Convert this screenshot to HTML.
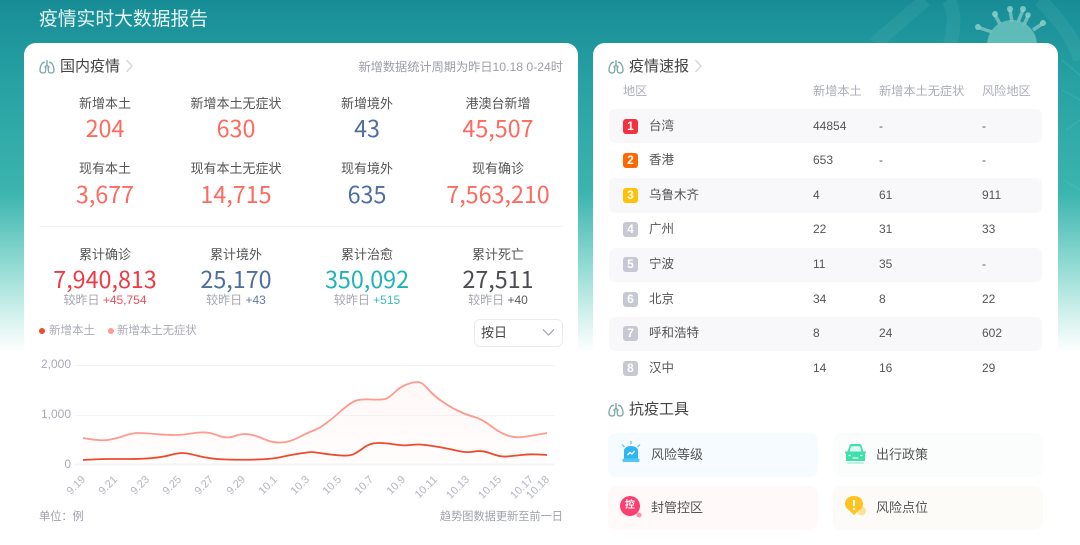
<!DOCTYPE html>
<html lang="zh">
<head>
<meta charset="utf-8">
<title>疫情实时大数据报告</title>
<style>
html,body{margin:0;padding:0;}
body{width:1080px;height:545px;overflow:hidden;position:relative;background:#fff;font-family:"Liberation Sans","Noto Sans CJK SC",sans-serif;color:#555;}
.bg{position:absolute;left:0;top:0;width:1080px;height:352px;background:linear-gradient(180deg,#178c96 0%,#26a0a2 22%,#3cb5af 55%,#8fdad2 75%,#d5f2ee 90%,#fff 100%);}
.card{position:absolute;top:43px;background:#fff;border-radius:12px 12px 0 0;height:502px;}
.a{position:absolute;white-space:nowrap;line-height:20px;}
.c{position:absolute;white-space:nowrap;line-height:20px;transform:translateX(-50%);}
.lb{font-size:13px;color:#555;}
.n{font-family:"Noto Sans CJK SC","Liberation Sans",sans-serif;font-size:23.300px;font-weight:400;line-height:30px;}
.red{color:#ff6a5e;}.blue{color:#4d6e9f;}
.sub{font-size:12px;color:#a5a7b2;}
.h{font-size:15px;color:#444;}
.th{font-size:12.2px;color:#abaeb8;}
.td{font-size:12px;color:#555;}
.rg{font-size:12.5px;}
.row{position:absolute;left:609px;width:433px;height:34.5px;background:#f8f8fb;border-radius:6px;}
.bd{position:absolute;left:623px;width:15px;height:15px;border-radius:3px;color:#fff;font-size:12px;font-weight:bold;text-align:center;line-height:15px;}
.tool{position:absolute;width:210px;height:44px;border-radius:8px;}
</style>
</head>
<body>
<div class="bg"></div>
<svg class="a" style="left:860px;top:0;line-height:0" width="220" height="352" viewBox="860 0 220 352" fill="none">
  <path d="M875 44 C895 25 915 10 925 0 M950 44 C955 25 955 10 948 0 M1040 0 C1060 20 1075 40 1080 60" stroke="#7fd0c8" stroke-opacity=".12" stroke-width="14"/>
  <g stroke="#8ccfc9" stroke-opacity=".7" stroke-width="3.500">
    <path d="M1012 22L1010 10M1018 22L1023 10M1024 25L1028 16M1033 30L1042 24M1000 24L995 15M992 32L980 28"/>
  </g>
  <g fill="#9ad5cf" fill-opacity=".75">
    <circle cx="1010" cy="9" r="3"/><circle cx="1023" cy="9" r="3"/><circle cx="1028" cy="15" r="2.800"/><circle cx="1043" cy="23" r="3"/><circle cx="995" cy="14" r="3"/><circle cx="978" cy="27" r="3"/>
  </g>
  <circle cx="1012" cy="45" r="25" fill="#74c8c3" fill-opacity=".75"/>
  <path d="M1062 60L1080 75M1062 90L1080 100M1066 130L1080 120M1064 180L1080 190" stroke="#8ad5cd" stroke-opacity=".2"/>
</svg>
<div class="a" style="left:39px;top:7px;font-size:18.8px;color:#e6f6f4;line-height:24px;">疫情实时大数据报告</div>

<div class="card" style="left:24px;width:554px;"></div>
<div class="card" style="left:593px;width:465px;"></div>

<!-- left header -->
<svg class="a" style="left:39px;top:59px;line-height:0" width="16" height="15" viewBox="0 0 16 15" fill="none" stroke="#7ea9aa" stroke-width="1.400"><path d="M8 1V6L5.500 8.500M8 6L10.500 8.500"/><path d="M6 3.500C3 2.500 1 7.500 1 11C1 14 3.500 14.500 6 13.500C6.800 13 6.800 10 6.800 7.500"/><path d="M10 3.500C13 2.500 15 7.500 15 11C15 14 12.500 14.500 10 13.500C9.200 13 9.200 10 9.200 7.500"/></svg>
<div class="a h" style="left:60px;top:57px;">国内疫情</div>
<svg class="a" style="left:125px;top:59px;line-height:0" width="9" height="14" fill="none" stroke="#d8d8d8" stroke-width="1.500"><path d="M1.500 1L7 7L1.500 13"/></svg>
<div class="a" style="right:517px;top:57px;font-size:12.2px;color:#9b9ea8;">新增数据统计周期为昨日10.18 0-24时</div>

<div class="c lb" style="left:105px;top:94px;">新增本土</div>
<div class="c lb" style="left:236px;top:94px;">新增本土无症状</div>
<div class="c lb" style="left:367px;top:94px;">新增境外</div>
<div class="c lb" style="left:498px;top:94px;">港澳台新增</div>
<div class="c n red" style="left:105px;top:112px;">204</div>
<div class="c n red" style="left:236px;top:112px;">630</div>
<div class="c n blue" style="left:367px;top:112px;">43</div>
<div class="c n red" style="left:498px;top:112px;">45,507</div>

<div class="c lb" style="left:105px;top:159px;">现有本土</div>
<div class="c lb" style="left:236px;top:159px;">现有本土无症状</div>
<div class="c lb" style="left:367px;top:159px;">现有境外</div>
<div class="c lb" style="left:498px;top:159px;">现有确诊</div>
<div class="c n red" style="left:105px;top:178px;">3,677</div>
<div class="c n red" style="left:236px;top:178px;">14,715</div>
<div class="c n blue" style="left:367px;top:178px;">635</div>
<div class="c n red" style="left:498px;top:178px;">7,563,210</div>

<div class="a" style="left:39px;top:226px;width:524px;height:1px;background:#f2f3f5;"></div>

<div class="c lb" style="left:105px;top:245px;">累计确诊</div>
<div class="c lb" style="left:236px;top:245px;">累计境外</div>
<div class="c lb" style="left:367px;top:245px;">累计治愈</div>
<div class="c lb" style="left:498px;top:245px;">累计死亡</div>
<div class="c n" style="left:105px;top:263px;color:#ee3a45;">7,940,813</div>
<div class="c n blue" style="left:236px;top:263px;">25,170</div>
<div class="c n" style="left:367px;top:263px;color:#1fb2b8;">350,092</div>
<div class="c n" style="left:498px;top:263px;color:#4c4c50;">27,511</div>
<div class="c sub" style="left:105px;top:290px;">较昨日 <span style="color:#f0505a">+45,754</span></div>
<div class="c sub" style="left:236px;top:290px;">较昨日 <span style="color:#5f7ba6">+43</span></div>
<div class="c sub" style="left:367px;top:290px;">较昨日 <span style="color:#3dbcc0">+515</span></div>
<div class="c sub" style="left:498px;top:290px;">较昨日 <span style="color:#5b5b60">+40</span></div>

<!-- legend -->
<div class="a" style="left:39px;top:328px;width:6px;height:6px;border-radius:50%;background:#ee4b2d;"></div>
<div class="a" style="left:49px;top:320.500px;font-size:11.500px;color:#a9abb6;">新增本土</div>
<div class="a" style="left:108px;top:328px;width:6px;height:6px;border-radius:50%;background:#ff9a8f;"></div>
<div class="a" style="left:117px;top:320.500px;font-size:11.400px;color:#a9abb6;">新增本土无症状</div>

<!-- select -->
<div class="a" style="left:474px;top:319px;width:87px;height:26px;border:1.500px solid #e9ebf2;border-radius:6px;"></div>
<div class="a" style="left:481px;top:323px;font-size:13px;color:#444;">按日</div>
<svg class="a" style="left:542px;top:328px;line-height:0" width="13" height="9" fill="none" stroke="#a3a8b4" stroke-width="1.300"><path d="M1 1.500L6.500 7L12 1.500"/></svg>

<!-- chart -->
<svg class="a" style="left:0;top:350px;line-height:0" width="590" height="160" viewBox="0 350 590 160">
  <defs>
    <linearGradient id="g" x1="0" y1="0" x2="0" y2="1"><stop offset="0" stop-color="#ff9a8f" stop-opacity=".07"/><stop offset="1" stop-color="#ff9a8f" stop-opacity=".02"/></linearGradient>
  </defs>
  <path d="M75 365.500H555M75 415.500H555" stroke="#f3f4f6"/>
  <path d="M75 464.500H555" stroke="#f3f4f7" stroke-width="2"/>
  <path fill="url(#g)" d="M83 438Q100 441 107.500 440Q115 439 123.500 436Q132 433 137.500 433Q143 433 155 434Q167 435 174.500 435Q182 435 191 433.500Q200 432 206 432.500Q212 433 219.500 436Q227 439 235 436Q243 433 250 434.500Q257 436 265 439.500Q273 443 281.500 442.500Q290 442 298.500 437.500Q307 433 313.500 430.500Q320 428 326.500 423Q333 418 341.500 410.500Q350 403 355 401Q360 399 371.500 399.500Q383 400 386.500 398.500Q390 397 395 392Q400 387 406.500 384.500Q413 382 417.500 382Q422 382 427.500 388.500Q433 395 441.500 401Q450 407 458.500 411Q467 415 474.500 417Q482 419 491 426Q500 433 507.500 435.500Q515 438 522.500 437Q530 436 538.500 434.500L547 433V464H83Z"/>
  <path fill="none" stroke="#ff9a8f" stroke-width="1.800" d="M83 438Q100 441 107.500 440Q115 439 123.500 436Q132 433 137.500 433Q143 433 155 434Q167 435 174.500 435Q182 435 191 433.500Q200 432 206 432.500Q212 433 219.500 436Q227 439 235 436Q243 433 250 434.500Q257 436 265 439.500Q273 443 281.500 442.500Q290 442 298.500 437.500Q307 433 313.500 430.500Q320 428 326.500 423Q333 418 341.500 410.500Q350 403 355 401Q360 399 371.500 399.500Q383 400 386.500 398.500Q390 397 395 392Q400 387 406.500 384.500Q413 382 417.500 382Q422 382 427.500 388.500Q433 395 441.500 401Q450 407 458.500 411Q467 415 474.500 417Q482 419 491 426Q500 433 507.500 435.500Q515 438 522.500 437Q530 436 538.500 434.500L547 433"/>
  <path fill="none" stroke="#ee4b2d" stroke-width="1.800" d="M83 460Q100 459 107.500 459Q115 459 129 459Q143 459 153 458Q163 457 170.500 455Q178 453 182.500 453Q187 453 198.500 456Q210 459 226.500 459.500Q243 460 258 459.500Q273 459 281.500 457Q290 455 300 453.500Q310 452 311.500 452Q313 452 323 453.500Q333 455 341.500 455.500Q350 456 354 454Q358 452 364 447.500Q370 443 378.500 443Q387 443 395 444.500Q403 446 410.500 445Q418 444 425.500 445Q433 446 441.500 447.500Q450 449 458.500 451Q467 453 474.500 451.500Q482 450 491 453.500Q500 457 506.500 456.500Q513 456 521.500 455Q530 454 538.500 454.500L547 455"/>
  <g font-family="Liberation Sans,sans-serif" font-size="12" fill="#a8abb7" text-anchor="end">
    <text x="71" y="368">2,000</text><text x="71" y="418">1,000</text><text x="71" y="468">0</text>
  </g>
  <g font-family="Liberation Sans,sans-serif" font-size="11" fill="#b3b6c2" text-anchor="end">
    <text transform="translate(86 480) rotate(-45)">9.19</text>
    <text transform="translate(118 480) rotate(-45)">9.21</text>
    <text transform="translate(150 480) rotate(-45)">9.23</text>
    <text transform="translate(182 480) rotate(-45)">9.25</text>
    <text transform="translate(214 480) rotate(-45)">9.27</text>
    <text transform="translate(246 480) rotate(-45)">9.29</text>
    <text transform="translate(278 480) rotate(-45)">10.1</text>
    <text transform="translate(310 480) rotate(-45)">10.3</text>
    <text transform="translate(342 480) rotate(-45)">10.5</text>
    <text transform="translate(374 480) rotate(-45)">10.7</text>
    <text transform="translate(406 480) rotate(-45)">10.9</text>
    <text transform="translate(438 480) rotate(-45)">10.11</text>
    <text transform="translate(470 480) rotate(-45)">10.13</text>
    <text transform="translate(502 480) rotate(-45)">10.15</text>
    <text transform="translate(534 480) rotate(-45)">10.17</text>
    <text transform="translate(550 480) rotate(-45)">10.18</text>
  </g>
</svg>
<div class="a" style="left:39px;top:507px;font-size:11.200px;color:#9fa2ac;">单位：例</div>
<div class="a" style="right:517px;top:507px;font-size:11.200px;color:#9fa2ac;">趋势图数据更新至前一日</div>

<!-- right header -->
<svg class="a" style="left:608px;top:59px;line-height:0" width="16" height="15" viewBox="0 0 16 15" fill="none" stroke="#7ea9aa" stroke-width="1.400"><path d="M8 1V6L5.500 8.500M8 6L10.500 8.500"/><path d="M6 3.500C3 2.500 1 7.500 1 11C1 14 3.500 14.500 6 13.500C6.800 13 6.800 10 6.800 7.500"/><path d="M10 3.500C13 2.500 15 7.500 15 11C15 14 12.500 14.500 10 13.500C9.200 13 9.200 10 9.200 7.500"/></svg>
<div class="a h" style="left:629px;top:57px;">疫情速报</div>
<svg class="a" style="left:694px;top:59px;line-height:0" width="9" height="14" fill="none" stroke="#d8d8d8" stroke-width="1.500"><path d="M1.500 1L7 7L1.500 13"/></svg>

<div class="a th" style="left:623px;top:81px;">地区</div>
<div class="a th" style="left:813px;top:81px;">新增本土</div>
<div class="a th" style="left:879px;top:81px;">新增本土无症状</div>
<div class="a th" style="left:982px;top:81px;">风险地区</div>

<div class="row" style="top:108.500px;"></div>
<div class="row" style="top:178px;"></div>
<div class="row" style="top:247.500px;"></div>
<div class="row" style="top:316.500px;"></div>

<div class="bd" style="top:119px;background:#f5303f;">1</div>
<div class="bd" style="top:153px;background:#ff6a00;">2</div>
<div class="bd" style="top:188px;background:#ffc107;">3</div>
<div class="bd" style="top:222px;background:#c6c9d4;">4</div>
<div class="bd" style="top:257px;background:#c6c9d4;">5</div>
<div class="bd" style="top:292px;background:#c6c9d4;">6</div>
<div class="bd" style="top:326px;background:#c6c9d4;">7</div>
<div class="bd" style="top:361px;background:#c6c9d4;">8</div>

<div class="a td rg" style="left:649px;top:116px;">台湾</div><div class="a td" style="left:813px;top:116px;">44854</div><div class="a td" style="left:879px;top:116px;">-</div><div class="a td" style="left:982px;top:116px;">-</div>
<div class="a td rg" style="left:649px;top:150px;">香港</div><div class="a td" style="left:813px;top:150px;">653</div><div class="a td" style="left:879px;top:150px;">-</div><div class="a td" style="left:982px;top:150px;">-</div>
<div class="a td rg" style="left:649px;top:185px;">乌鲁木齐</div><div class="a td" style="left:813px;top:185px;">4</div><div class="a td" style="left:879px;top:185px;">61</div><div class="a td" style="left:982px;top:185px;">911</div>
<div class="a td rg" style="left:649px;top:219px;">广州</div><div class="a td" style="left:813px;top:219px;">22</div><div class="a td" style="left:879px;top:219px;">31</div><div class="a td" style="left:982px;top:219px;">33</div>
<div class="a td rg" style="left:649px;top:254px;">宁波</div><div class="a td" style="left:813px;top:254px;">11</div><div class="a td" style="left:879px;top:254px;">35</div><div class="a td" style="left:982px;top:254px;">-</div>
<div class="a td rg" style="left:649px;top:289px;">北京</div><div class="a td" style="left:813px;top:289px;">34</div><div class="a td" style="left:879px;top:289px;">8</div><div class="a td" style="left:982px;top:289px;">22</div>
<div class="a td rg" style="left:649px;top:323px;">呼和浩特</div><div class="a td" style="left:813px;top:323px;">8</div><div class="a td" style="left:879px;top:323px;">24</div><div class="a td" style="left:982px;top:323px;">602</div>
<div class="a td rg" style="left:649px;top:358px;">汉中</div><div class="a td" style="left:813px;top:358px;">14</div><div class="a td" style="left:879px;top:358px;">16</div><div class="a td" style="left:982px;top:358px;">29</div>

<!-- tools -->
<svg class="a" style="left:608px;top:402px;line-height:0" width="16" height="15" viewBox="0 0 16 15" fill="none" stroke="#7ea9aa" stroke-width="1.400"><path d="M8 1V6L5.500 8.500M8 6L10.500 8.500"/><path d="M6 3.500C3 2.500 1 7.500 1 11C1 14 3.500 14.500 6 13.500C6.800 13 6.800 10 6.800 7.500"/><path d="M10 3.500C13 2.500 15 7.500 15 11C15 14 12.500 14.500 10 13.500C9.200 13 9.200 10 9.200 7.500"/></svg>
<div class="a h" style="left:629px;top:400px;">抗疫工具</div>

<div class="tool" style="left:608px;top:433px;background:#f6fbff;"></div>
<div class="tool" style="left:833px;top:433px;background:#fbfdfd;"></div>
<div class="tool" style="left:608px;top:486px;background:#fff9f9;"></div>
<div class="tool" style="left:833px;top:486px;background:#fdfbf8;"></div>

<svg class="a" style="left:620px;top:440px;line-height:0" width="22" height="24" viewBox="0 0 22 24">
  <path d="M11 1V4M2 4.500L4.500 7M20 4.500L17.500 7" stroke="#6fd0f2" stroke-width="1.500"/>
  <path d="M4 19V11C4 7.500 7.500 6 11 6C14.500 6 18 7.500 18 11V19Z" fill="#2fb6f0"/>
  <rect x="2.500" y="18.500" width="17" height="3.500" rx="1" fill="#53c7f5"/>
  <path d="M7.500 15L10 12.500L12 14L14.500 11" stroke="#fff" stroke-width="1.300" fill="none"/>
</svg>
<svg class="a" style="left:844px;top:443px;line-height:0" width="23" height="22" viewBox="0 0 23 22">
  <path d="M3.500 8.500L5.500 2.500C5.800 1.500 6.500 1 7.500 1H15.500C16.500 1 17.200 1.500 17.500 2.500L19.500 8.500H22V10.500H21V18H2V10.500H1V8.500Z" fill="#3fe0ab"/>
  <path d="M5.500 8.500L7 3.200H16L17.500 8.500Z" fill="#dffcf1"/>
  <path d="M4.500 12.500H7M16 12.500H18.500M8.500 15H14.500" stroke="#e8fff6" stroke-width="1.300"/>
  <rect x="3" y="19" width="17" height="2" rx="1" fill="#b9f5e0"/>
</svg>
<svg class="a" style="left:619px;top:495px;line-height:0" width="24" height="24" viewBox="0 0 24 24">
  <circle cx="20" cy="20" r="2.500" fill="#ff8fa8"/>
  <circle cx="11" cy="11" r="10" fill="#fb3f70"/>
</svg>
<div class="c" style="left:630px;top:496px;font-size:10px;font-weight:bold;color:#fff;">控</div>
<svg class="a" style="left:844px;top:495px;line-height:0" width="24" height="24" viewBox="0 0 24 24">
  <circle cx="17.500" cy="16" r="4.500" fill="#ffe29a"/>
  <path d="M10 20L3.500 14C1.500 12 1 10 1 9C1 4 5 1 10 1C15 1 19 4 19 9C19 11 18 13 16.500 14Z" fill="#ffc21f"/>
  <path d="M10 5V11" stroke="#fff" stroke-width="2"/><circle cx="10" cy="14" r="1.200" fill="#fff"/>
</svg>

<div class="a" style="left:651px;top:445px;font-size:13px;color:#555;">风险等级</div>
<div class="a" style="left:876px;top:445px;font-size:13px;color:#555;">出行政策</div>
<div class="a" style="left:651px;top:498px;font-size:13px;color:#555;">封管控区</div>
<div class="a" style="left:876px;top:498px;font-size:13px;color:#555;">风险点位</div>
</body>
</html>
